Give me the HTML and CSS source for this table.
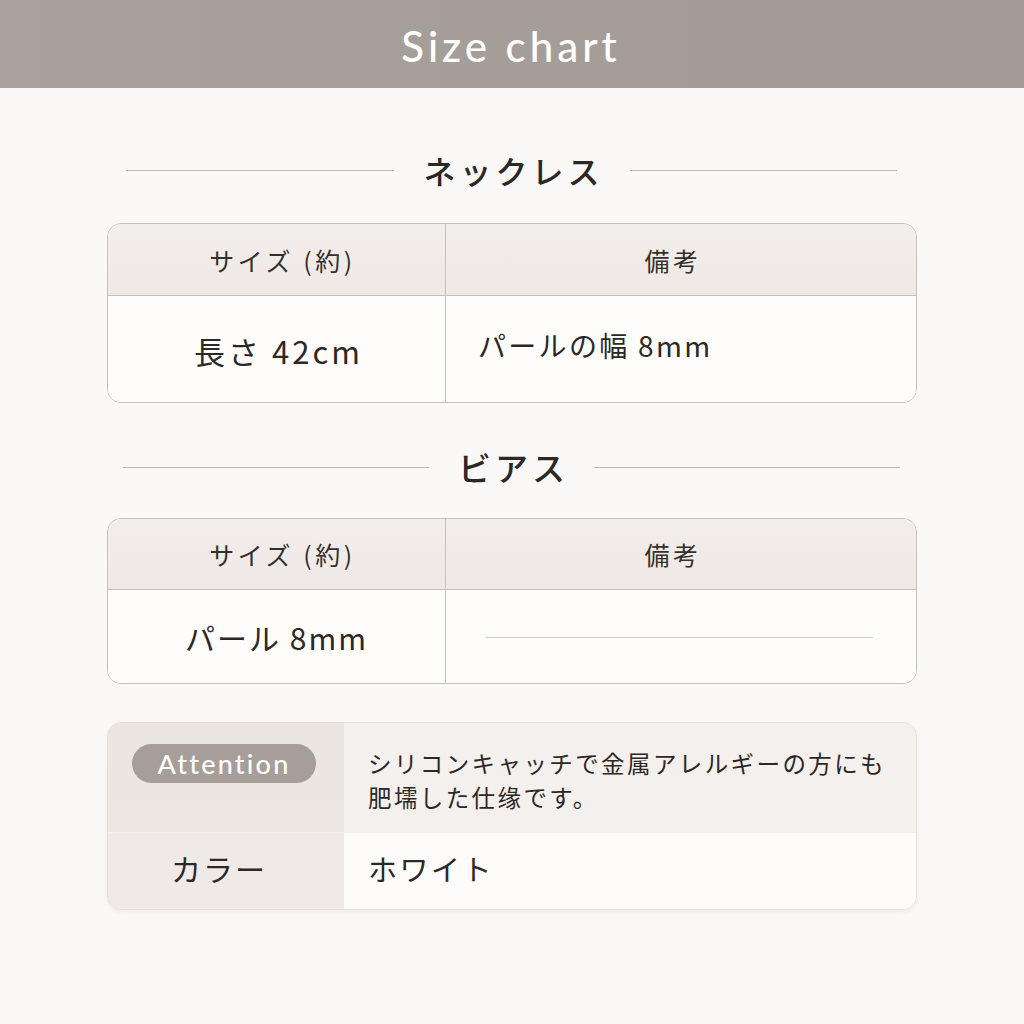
FILE: index.html
```html
<!DOCTYPE html>
<html lang="ja">
<head>
<meta charset="utf-8">
<title>Size chart</title>
<link rel="stylesheet" href="styles.css">
</head>
<body>
<header class="top-bar"><h1 class="top-title">Size chart</h1></header>
<main class="content">
  <div class="section-title title-necklace"><span class="rule"></span><h2>ネックレス</h2><span class="rule"></span></div>
  <div class="chart chart-necklace">
    <div class="cell head head-size">サイズ (約)</div>
    <div class="cell head head-note">備考</div>
    <div class="cell body center big">長さ 42cm</div>
    <div class="cell body note">パールの幅 8mm</div>
  </div>

  <div class="section-title title-pierce"><span class="rule"></span><h2>ビアス</h2><span class="rule"></span></div>
  <div class="chart chart-pierce">
    <div class="cell head head-size">サイズ (約)</div>
    <div class="cell head head-note">備考</div>
    <div class="cell body center big">パール 8mm</div>
    <div class="cell body dash-cell"><span class="dash"></span></div>
  </div>

  <div class="info">
    <div class="info-label info-label-top"><span class="pill">Attention</span></div>
    <div class="info-value info-value-top">シリコンキャッチで金属アレルギーの方にも<br>肥壖した仕缘です。</div>
    <div class="info-label info-label-bottom">カラー</div>
    <div class="info-value info-value-bottom">ホワイト</div>
  </div>
</main>
</body>
</html>
```

FILE: styles.css
```css
* { box-sizing: border-box; }
html, body { margin: 0; padding: 0; }
body {
  background: #fbf9f8;
  font-family: "Noto Sans CJK JP", "Noto Sans", sans-serif;
  color: #2f2b29;
  width: 1024px;
  height: 1024px;
}
.top-bar {
  height: 88px;
  background: linear-gradient(90deg, #a9a19c 0%, #a59d98 50%, #a39b96 100%);
  display: flex;
  align-items: center;
  justify-content: center;
}
.top-title {
  margin: 0;
  color: #ffffff;
  font-family: "Lato", "Noto Sans", sans-serif;
  font-weight: 500;
  font-size: 42px;
  letter-spacing: 4px;
  line-height: 1;
  padding-top: 4px;
  margin-right: 2px;
}
.content {
  width: 810px;
  margin: 0 auto;
  padding-top: 63px;
}
.section-title {
  display: flex;
  align-items: center;
  gap: 30px;
  height: 40px;
}
.title-necklace { margin: 0 20px 32px 19px; position: relative; top: -1px; }
.title-pierce { margin: 44px 17px 31px 16px; gap: 29px; }
.section-title h2 {
  margin: 0;
  font-size: 32px;
  font-weight: 500;
  letter-spacing: 4px;
  line-height: 40px;
  color: #2c2826;
  margin-right: -4px;
}
.title-pierce h2 { font-size: 33px; }
.rule {
  flex: 1;
  height: 1px;
  background: #bdb4ae;
}
.chart {
  display: grid;
  grid-template-columns: 338px 1fr;
  border: 1.5px solid #c7bfba;
  border-radius: 14px;
  overflow: hidden;
  background: #fefdfc;
}
.chart-necklace { height: 180px; grid-template-rows: 72px 1fr; }
.chart-pierce { height: 166px; grid-template-rows: 71px 1fr; }
.cell {
  display: flex;
  align-items: center;
}
.cell:nth-child(odd) { border-right: 1.5px solid #c7bfba; }
.head {
  background: linear-gradient(180deg, #f2eeeb, #efe9e6);
  border-bottom: 1.5px solid #c7bfba;
  justify-content: center;
  font-size: 25px;
  letter-spacing: 3.5px;
  color: #34302e;
  white-space: pre;
}
.head-size { padding-left: 12px; }
.head-note { padding-right: 16px; }
.body { background: #fefdfc; }
.center { justify-content: center; }
.big {
  font-size: 31px;
  letter-spacing: 3px;
  color: #2c2826;
}
.chart-necklace .big { padding-top: 2px; padding-left: 4px; }
.chart-pierce .big { padding-top: 0; font-size: 30px; letter-spacing: 2px; }
.note {
  padding-left: 32px;
  font-size: 28px;
  letter-spacing: 2.3px;
  color: #2c2826;
  padding-bottom: 8px;
}
.dash-cell { padding: 2px 43px 0 40px; }
.dash {
  flex: 1;
  height: 1px;
  background: #d6cec9;
}
.info {
  margin-top: 38px;
  display: grid;
  grid-template-columns: 236px 1fr;
  grid-template-rows: 110px 76px;
  border: 1px solid #e6e0dc;
  border-radius: 14px;
  overflow: hidden;
  box-shadow: 0 2px 4px rgba(120, 105, 95, 0.10);
}
.info-label {
  background: #ede7e4;
  display: flex;
}
.info-label-top {
  background: linear-gradient(180deg, #ebe5e2, #ede7e4);
  padding: 21px 0 0 24px;
  align-items: flex-start;
  border-bottom: 1px solid #f3efed;
}
.pill {
  display: inline-flex;
  align-items: center;
  justify-content: center;
  width: 184px;
  height: 39px;
  border-radius: 20px;
  background: #a69e99;
  color: #ffffff;
  font-family: "Lato", "Noto Sans", sans-serif;
  font-size: 27px;
  font-weight: 500;
  letter-spacing: 2.2px;
  padding-bottom: 1px;
}
.info-label-bottom {
  background: #efeae7;
  align-items: center;
  padding-left: 63px;
  font-size: 30px;
  letter-spacing: 2px;
  color: #2c2826;
  padding-bottom: 6px;
}
.info-value {
  padding-left: 24px;
  color: #2c2826;
}
.info-value-top {
  background: #f4f0ee;
  font-size: 23.5px;
  letter-spacing: 2.4px;
  line-height: 34px;
  padding-top: 23px;
  white-space: nowrap;
}
.info-value-bottom {
  background: #fefcfb;
  display: flex;
  align-items: center;
  font-size: 29px;
  letter-spacing: 2.5px;
  padding-bottom: 6px;
}
```
